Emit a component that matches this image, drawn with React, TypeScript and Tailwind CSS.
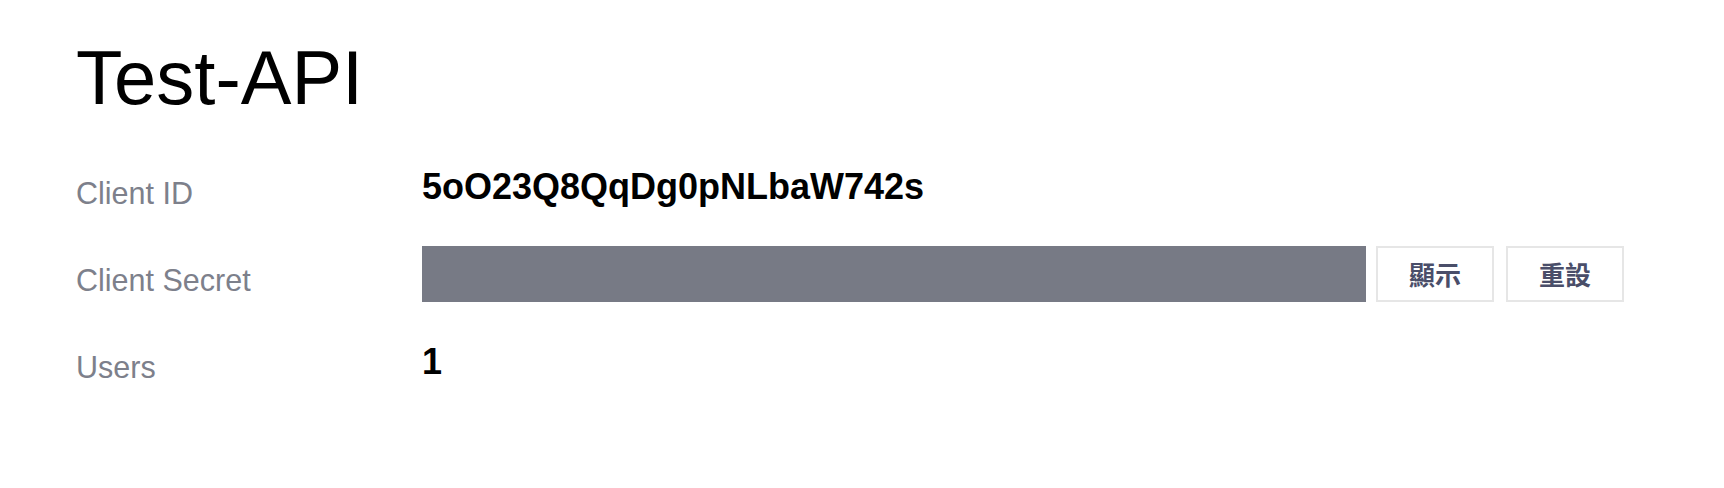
import React from "react";

const labelCls = "w-[346px] text-[30.5px] leading-none text-[#7d808b]";

const buttonCls =
  "w-[118px] h-[56px] border-2 border-[#e6e6e6] bg-white text-[26px] font-bold leading-none text-[#4a4e69] flex items-center justify-center";

const App = () => {
  return (
    <div className="w-[1724px] h-[488px] bg-white pl-[76px] pt-[40px] font-['Liberation_Sans',Arial,sans-serif]">
      <h1 className="text-[76px] leading-none font-normal text-black">Test-API</h1>

      <div className="mt-[46px] flex flex-col">
        <div className="flex items-center h-[56px]">
          <div className={`${labelCls} mt-[7px]`}>Client ID</div>
          <div className="text-[36px] leading-none font-bold text-black mb-[6px]">
            5oO23Q8QqDg0pNLbaW742s
          </div>
        </div>

        <div className="flex items-center h-[56px] mt-[28px]">
          <div className={`${labelCls} mt-[13px]`}>Client Secret</div>
          <div className="w-[944px] h-[56px] bg-[#777a85]" />
          <div className="flex gap-[12px] ml-[10px] font-['Noto_Sans_CJK_TC','Noto_Sans_CJK_SC',sans-serif]">
            <button className={buttonCls}>顯示</button>
            <button className={buttonCls}>重設</button>
          </div>
        </div>

        <div className="flex items-center h-[56px] mt-[32px]">
          <div className={`${labelCls} mt-[10px]`}>Users</div>
          <div className="text-[36px] leading-none font-bold text-black">1</div>
        </div>
      </div>
    </div>
  );
};

export default App;
